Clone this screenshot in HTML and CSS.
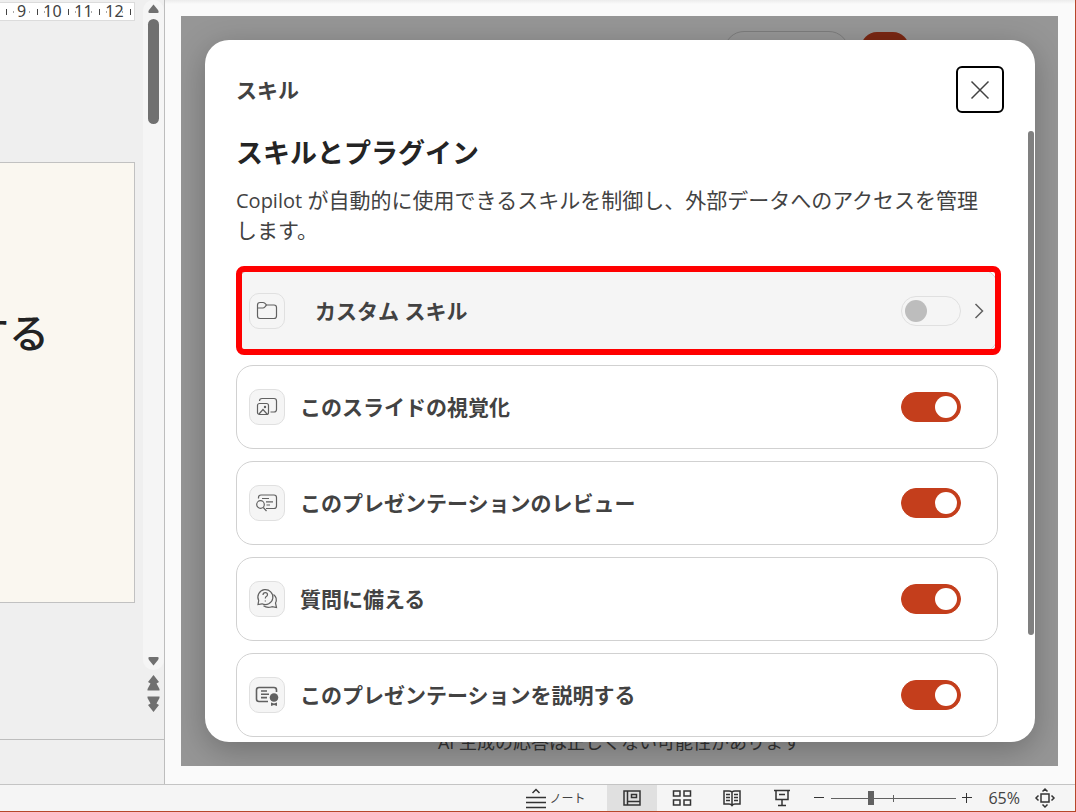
FILE: index.html
```html
<!DOCTYPE html>
<html lang="ja">
<head>
  <meta charset="UTF-8">
  <title>スキルとプラグイン</title>
  <link rel="stylesheet" href="styles.css">
</head>
<body>
  <div class="workspace">
    <div class="editor">
      <div class="canvas">
        <div class="canvas-area">
          <div class="ruler">
            <span>9</span><span>10</span><span>11</span><span>12</span><span class="ruler-end"></span>
          </div>
          <div class="slide"><p class="slide-text">する</p></div>
        </div>
        <div class="scroll-col">
          <div class="scrollbar">
            <svg width="11" height="10" viewBox="0 0 11 10"><path d="M5.500 0.500 L10 6 Q11.500 9 9.500 9 H1.500 Q-0.500 9 1 6 Z"/></svg>
            <div class="scroll-thumb"></div>
            <svg class="scroll-down" width="11" height="10" viewBox="0 0 11 10"><path d="M5.500 9.500 L10 4 Q11.500 1 9.500 1 H1.500 Q-0.500 1 1 4 Z"/></svg>
          </div>
          <svg width="11" height="16" viewBox="0 0 11 16"><path d="M5.500 0 L11 7 L8.500 8.500 L11.500 14 V15.500 H-0.500 V14 L2.500 8.500 L0 7 Z"/></svg>
          <svg width="11" height="16" viewBox="0 0 11 16"><path d="M5.500 16 L11 9 L8.500 7.500 L11.500 2 V0.500 H-0.500 V2 L2.500 7.500 L0 9 Z"/></svg>
        </div>
      </div>
      <div class="notes-pane"></div>
    </div>

    <div class="task-pane">
      <div class="overlay">
        <div class="behind-pill"></div>
        <div class="behind-send"></div>
        <p class="behind-note">AI 生成の応答は正しくない可能性があります</p>

        <div class="dialog" role="dialog">
          <div class="dialog-head">
            <span class="dialog-name">スキル</span>
            <button class="close-btn" aria-label="閉じる">
              <svg width="20" height="20" viewBox="0 0 20 20"><path d="M1.500 1.500 L18.500 18.500 M18.500 1.500 L1.500 18.500"/></svg>
            </button>
          </div>
          <h1>スキルとプラグイン</h1>
          <p class="desc"><span class="latin">Copilot</span> が自動的に使用できるスキルを制御し、外部データへのアクセスを管理します。</p>

          <div class="skills">
            <div class="skill skill-custom">
              <span class="skill-icon">
                <svg width="22" height="22" viewBox="0 0 22 22"><path d="M1.500 5 Q1.500 2.500 4 2.500 H7 Q8 2.500 8.700 3.200 L10.500 5 H18 Q20.500 5 20.500 7.500 V16 Q20.500 18.500 18 18.500 H4 Q1.500 18.500 1.500 16 Z M1.500 8 H7 Q8 8 8.700 7.200 L10.500 5"/></svg>
              </span>
              <label for="s1">カスタム スキル</label>
              <input type="checkbox" class="toggle" id="s1">
              <span class="skill-more">
                <svg width="10" height="16" viewBox="0 0 10 16"><path d="M1.500 1 L8.500 8 L1.500 15"/></svg>
              </span>
            </div>
            <div class="skill">
              <span class="skill-icon">
                <svg width="22" height="22" viewBox="0 0 22 22"><path d="M3.500 5 Q3.500 2.500 6 2.500 H18 Q20.500 2.500 20.500 5 V13.500 Q20.500 16 18 16 H14.500"/><rect x="1.500" y="7.500" width="11" height="11" rx="2"/><path d="M3 18 L7 13.500 L11 18"/><circle cx="9" cy="11" r="0.600"/></svg>
              </span>
              <label for="s2">このスライドの視覚化</label>
              <input type="checkbox" class="toggle" id="s2" checked>
              <span class="skill-more"></span>
            </div>
            <div class="skill">
              <span class="skill-icon">
                <svg width="22" height="22" viewBox="0 0 22 22"><path d="M2.500 6.500 V5.500 Q2.500 3 5 3 H18 Q20.500 3 20.500 5.500 V14 Q20.500 16.500 18 16.500 H10"/><circle cx="4.500" cy="12.500" r="3.800"/><path d="M7.300 15.500 L10.500 19 M6 6.500 H13 M10 9.800 H17 M10.500 13 H14"/></svg>
              </span>
              <label for="s3">このプレゼンテーションのレビュー</label>
              <input type="checkbox" class="toggle" id="s3" checked>
              <span class="skill-more"></span>
            </div>
            <div class="skill">
              <span class="skill-icon">
                <svg width="22" height="22" viewBox="0 0 22 22"><path d="M2 16.500 L2.700 12.500 A7.500 7.500 0 1 1 6 15.800 Z"/><path d="M17.500 6.500 A7 7 0 0 1 19.500 15 L20.500 19.500 L16 18.700 Q11 20.500 7.500 17.800"/><path d="M7 7 Q7 4.700 9.300 4.700 Q11.500 4.700 11.500 6.700 Q11.500 7.800 10.300 8.600 Q9.300 9.300 9.300 10.500 M9.300 12.500 V13.500"/></svg>
              </span>
              <label for="s4">質問に備える</label>
              <input type="checkbox" class="toggle" id="s4" checked>
              <span class="skill-more"></span>
            </div>
            <div class="skill">
              <span class="skill-icon">
                <svg class="bold-icon" width="24" height="22" viewBox="0 0 24 22"><path d="M13 17.500 H4 Q1.500 17.500 1.500 15 V6 Q1.500 3.500 4 3.500 H19 Q21.500 3.500 21.500 6 V8"/><path d="M6 7 H12 M6 10.300 H14 M6 13.600 H12"/><circle class="fill" cx="19" cy="13.500" r="4.300"/><path class="fill" d="M16 18.500 L19 19.500 L22 18.500 V22 L19 21 L16 22 Z"/></svg>
              </span>
              <label for="s5">このプレゼンテーションを説明する</label>
              <input type="checkbox" class="toggle" id="s5" checked>
              <span class="skill-more"></span>
            </div>
          </div>
          <div class="dialog-thumb"></div>
        </div>
      </div>
    </div>
  </div>

  <div class="statusbar">
    <button class="notes-btn">
      <svg width="20" height="20" viewBox="0 0 20 20"><path d="M6.500 5 L10 1.500 L13.500 5 M0 9.500 H20 M0 14.500 H20 M0 19.500 H20"/></svg>
      <span>ノート</span>
    </button>
    <button class="view-btn active" aria-label="標準">
      <svg width="18" height="16" viewBox="0 0 18 16"><path d="M1 1 H17 V15 H1 Z M4.500 1 V15 M4.500 11.500 H17 M8.500 4.500 H13.500 V7.500 H8.500 Z"/></svg>
    </button>
    <button class="view-btn" aria-label="スライド一覧">
      <svg width="18" height="16" viewBox="0 0 18 16"><path d="M0.500 1 H7 V6 H0.500 Z M11 1 H17.500 V6 H11 Z M0.500 10 H7 V15 H0.500 Z M11 10 H17.500 V15 H11 Z"/></svg>
    </button>
    <button class="view-btn" aria-label="閲覧表示">
      <svg width="18" height="16" viewBox="0 0 18 16"><path d="M1 1 H6 Q8 1 9 2 Q10 1 12 1 H17 V14 H12 Q10 14 9 15.500 Q8 14 6 14 H1 Z M9 2 V15 M3 4.500 H7 M3 7.500 H7 M3 10.500 H7 M11 4.500 H15 M11 7.500 H15 M11 10.500 H15"/></svg>
    </button>
    <button class="view-btn" aria-label="スライドショー">
      <svg width="16" height="18" viewBox="0 0 16 18"><path d="M0 1.500 H16 M2 1.500 V10.500 H14 V1.500 M5 5.500 H11 M8 10.500 V16.500 M4 16.500 H12"/></svg>
    </button>
    <button class="zoom-btn" aria-label="縮小"><svg width="10" height="10" viewBox="0 0 10 10"><path d="M0 4.500 H10"/></svg></button>
    <input type="range" class="zoom" min="0" max="100" value="31" aria-label="ズーム">
    <button class="zoom-btn" aria-label="拡大"><svg width="10" height="10" viewBox="0 0 10 10"><path d="M0 4.500 H10 M4.500 0 V10"/></svg></button>
    <span class="zoom-value">65%</span>
    <button class="fit-btn" aria-label="ウィンドウに合わせる">
      <svg width="20" height="20" viewBox="0 0 20 20"><path d="M6 6 H14 V14 H6 Z M7.500 3.500 L10 1 L12.500 3.500 M7.500 16.500 L10 19 L12.500 16.500 M3.500 7.500 L1 10 L3.500 12.500 M16.500 7.500 L19 10 L16.500 12.500"/></svg>
    </button>
  </div>
</body>
</html>
```
FILE: styles.css
```css
* {
  box-sizing: border-box;
}
body {
  margin: 0;
  height: 100vh;
  display: flex;
  flex-direction: column;
  overflow: hidden;
  background: #fafafa;
  border-right: 1px solid #b7472a;
  border-bottom: 1px solid #b7472a;
  font-family: "Open Sans", "Noto Sans CJK JP", sans-serif;
  color: #424242;
}
p, h1 {
  margin: 0;
}
button {
  padding: 0;
  border: none;
  background: none;
  font-family: inherit;
  color: inherit;
  display: flex;
  align-items: center;
  justify-content: center;
}
svg {
  display: block;
  flex-shrink: 0;
  overflow: visible;
}
.workspace {
  flex: 1;
  min-height: 0;
  display: flex;
}

/* slide editor */
.editor {
  width: 165px;
  flex-shrink: 0;
  display: flex;
  flex-direction: column;
  background: #efefef;
  border-right: 1px solid #bdbdbd;
}
.canvas {
  flex: 1;
  display: flex;
  justify-content: space-between;
}
.canvas-area {
  width: 135px;
}
.ruler {
  height: 19px;
  margin-top: 2px;
  padding-left: 6px;
  display: flex;
  align-items: center;
  background: #fff;
  border: 1px solid #dcdcdc;
  border-left: none;
  font-family: "Noto Sans", sans-serif;
  font-size: 16px;
  line-height: 17px;
}
.ruler span {
  width: 31px;
  flex-shrink: 0;
  text-align: center;
  background:
    linear-gradient(#444, #444) 0 50% / 1px 6px no-repeat,
    linear-gradient(#aaa, #aaa) 7px 50% / 1px 2px no-repeat,
    linear-gradient(#aaa, #aaa) 23px 50% / 1px 2px no-repeat;
}
.ruler .ruler-end {
  width: 1px;
  height: 17px;
}
.slide {
  height: 441px;
  margin-top: 141px;
  padding: 140px 85px 0 0;
  display: flex;
  justify-content: flex-end;
  overflow: hidden;
  background: #faf7f0;
  border: 1px solid #c1c1c1;
  border-left: none;
}
.slide-text {
  font-size: 40px;
  line-height: 60px;
  font-weight: 500;
  color: #222;
  white-space: nowrap;
}
.scroll-col {
  width: 21px;
  display: flex;
  flex-direction: column;
  align-items: center;
  gap: 5px;
  padding-bottom: 27px;
  fill: #707070;
}
.scroll-col > svg {
  margin-right: 1px;
}
.scrollbar {
  flex: 1;
  width: 21px;
  padding: 4px 1px 4px 0;
  display: flex;
  flex-direction: column;
  align-items: center;
  gap: 5px;
  background: #f5f5f5;
  border-radius: 10px;
}
.scroll-thumb {
  width: 11px;
  height: 105px;
  border-radius: 6px;
  background: #707070;
}
.scroll-down {
  margin-top: auto;
}
.notes-pane {
  height: 45px;
  border-top: 1px solid #bdbdbd;
}

/* task pane */
.task-pane {
  flex: 1;
  padding: 16px 17px 18px 16px;
  display: flex;
  background: linear-gradient(#ececec, #fafafa 4px);
}
.overlay {
  flex: 1;
  position: relative;
  padding: 24px 23px 24px 24px;
  display: flex;
  overflow: hidden;
  background: #969696;
}
.behind-pill {
  position: absolute;
  top: 15px;
  right: 209px;
  width: 125px;
  height: 40px;
  border: 1px solid #7d7d7d;
  border-radius: 20px;
}
.behind-send {
  position: absolute;
  top: 16px;
  right: 149px;
  width: 48px;
  height: 40px;
  border-radius: 16px;
  background: #7a2713;
}
.behind-note {
  position: absolute;
  left: 0;
  right: 0;
  bottom: 10px;
  text-align: center;
  font-size: 18px;
  line-height: 28px;
  color: #333;
}
.dialog {
  flex: 1;
  position: relative;
  padding: 26px 37px 0 31px;
  overflow: hidden;
  background: #fff;
  border-radius: 24px;
  box-shadow: 0 8px 32px rgba(0, 0, 0, 0.26);
}
.dialog-head {
  display: flex;
  align-items: center;
  justify-content: space-between;
  margin-right: -6px;
}
.dialog-name {
  font-size: 21px;
  line-height: 30px;
  font-weight: 700;
}
.close-btn {
  width: 48px;
  height: 47px;
  border: 2px solid #000;
  border-radius: 6px;
}
.close-btn svg {
  stroke: #424242;
  stroke-width: 1.5;
}
h1 {
  margin-top: 20px;
  font-size: 27px;
  line-height: 40px;
  font-weight: 700;
  color: #242424;
}
.desc {
  margin-top: 12px;
  font-size: 21px;
  line-height: 30px;
}
.latin {
  font-size: 20px;
  line-height: 20px;
}
.skills {
  margin-top: 24px;
  display: flex;
  flex-direction: column;
  gap: 12px;
}
.skill {
  height: 84px;
  padding-left: 12px;
  display: flex;
  align-items: center;
  border: 1px solid #d1d1d1;
  border-radius: 17px;
}
.skill-icon {
  width: 36px;
  height: 36px;
  display: flex;
  align-items: center;
  justify-content: center;
  background: #f5f5f5;
  border: 1px solid #e0e0e0;
  border-radius: 10px;
}
.skill-icon svg {
  fill: none;
  stroke: #616161;
  stroke-width: 1.2;
}
.skill-icon .bold-icon {
  stroke-width: 1.6;
}
.skill-icon .fill {
  fill: #616161;
  stroke: none;
}
.skill label {
  flex: 1;
  margin-left: 15px;
  font-size: 21px;
  line-height: 30px;
  font-weight: 700;
}
.toggle {
  appearance: none;
  width: 60px;
  height: 30px;
  margin: 0;
  padding: 3px;
  display: flex;
  border: 1px solid #e0e0e0;
  border-radius: 15px;
}
.toggle::before {
  content: "";
  width: 22px;
  height: 22px;
  border-radius: 50%;
  background: #bdbdbd;
}
.toggle:checked {
  justify-content: flex-end;
  background: #c43e1c;
  border-color: #c43e1c;
}
.toggle:checked::before {
  background: #fff;
}
.skill-more {
  width: 36px;
  display: flex;
  justify-content: center;
}
.skill-more svg {
  fill: none;
  stroke: #616161;
  stroke-width: 1.5;
}
.skill-custom {
  position: relative;
  background: #f5f5f5;
}
.skill-custom label {
  margin-left: 30px;
}
/* red marker frame */
.skill-custom::after {
  content: "";
  position: absolute;
  inset: -4px -4px -3px -1px;
  border: 6px solid #f00;
  border-radius: 8px;
  pointer-events: none;
}
.dialog-thumb {
  position: absolute;
  top: 91px;
  right: 1px;
  width: 6px;
  height: 504px;
  border-radius: 3px;
  background: #808080;
}

/* status bar */
.statusbar {
  height: 27px;
  padding-right: 20px;
  display: flex;
  align-items: stretch;
  justify-content: flex-end;
  background: #f5f5f5;
  border-top: 1px solid #c4c4c4;
}
.statusbar svg {
  fill: none;
  stroke: #333;
  stroke-width: 1.5;
}
.notes-btn {
  margin-right: 22px;
  gap: 3px;
  font-size: 12px;
}
.view-btn {
  width: 50px;
}
.view-btn.active {
  background: #e0e0e0;
}
.zoom-btn {
  width: 10px;
}
.statusbar .zoom-btn svg {
  stroke-width: 1;
}
.view-btn + .zoom-btn {
  margin-left: 7px;
}
.zoom {
  appearance: none;
  width: 125px;
  height: 26px;
  margin: 0 6px 0 7px;
  background:
    linear-gradient(#616161, #616161) 0 50% / 100% 1px no-repeat,
    linear-gradient(#616161, #616161) 50% 50% / 1px 7px no-repeat;
}
.zoom::-webkit-slider-thumb {
  appearance: none;
  width: 6px;
  height: 14px;
  background: #616161;
}
.zoom-value {
  margin: 0 15px 0 16px;
  font-size: 16px;
  line-height: 26px;
}
```
